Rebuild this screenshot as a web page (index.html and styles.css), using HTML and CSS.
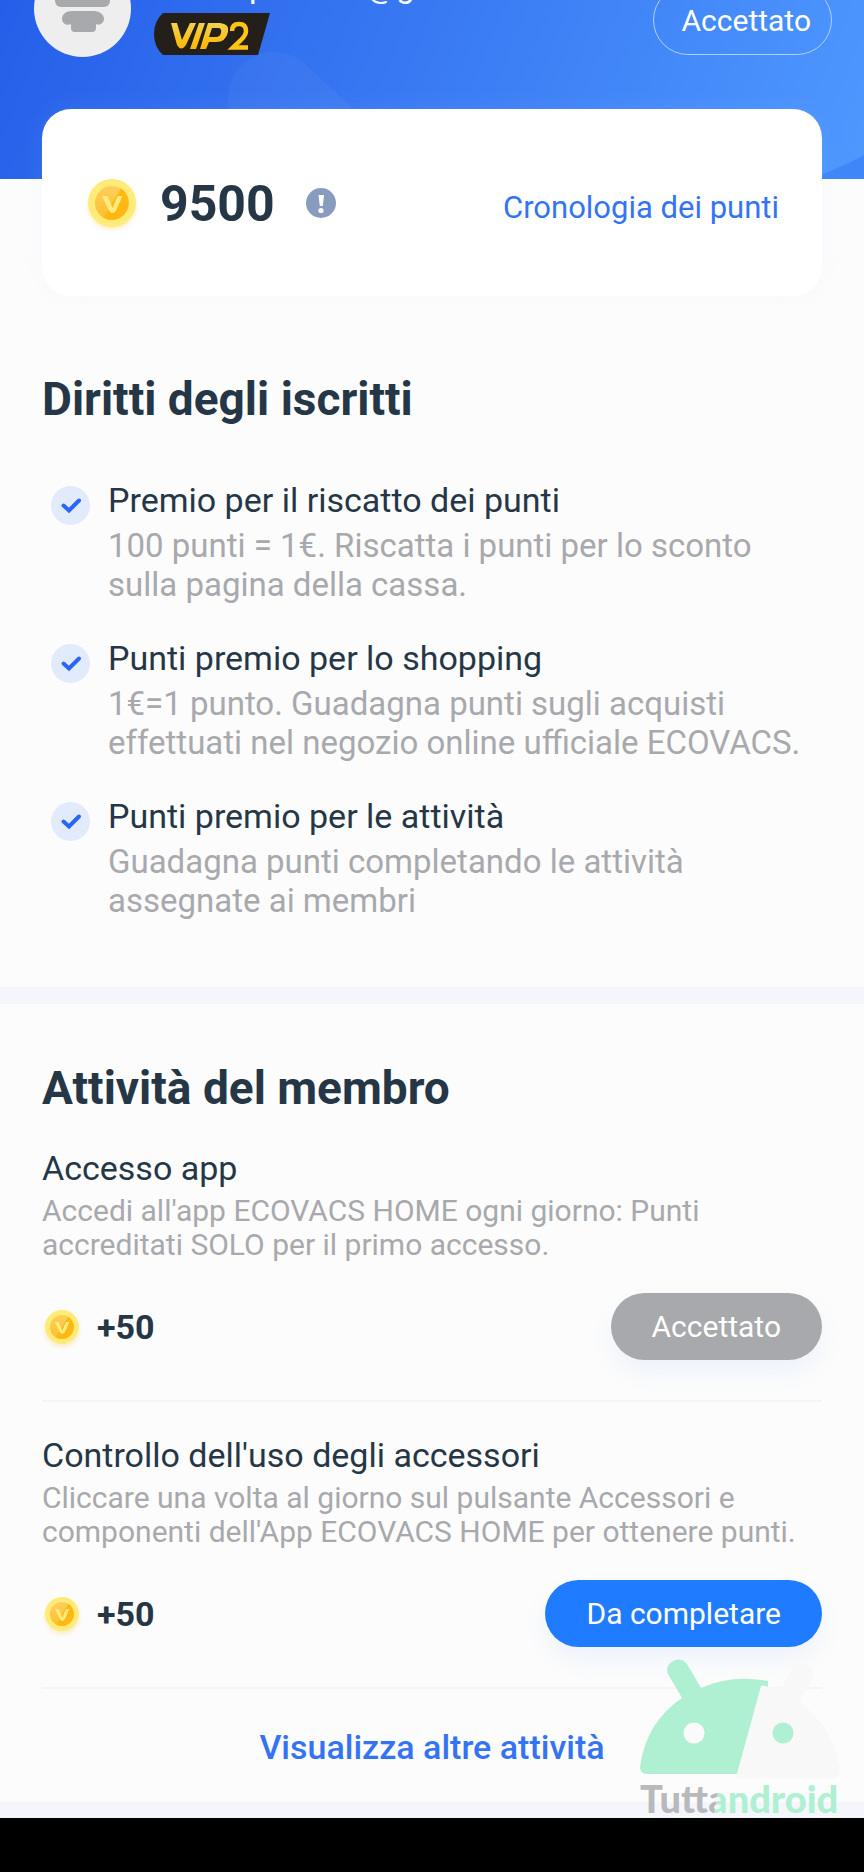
FILE: index.html
```html
<!DOCTYPE html>
<html lang="it">
<head>
<meta charset="utf-8">
<meta name="viewport" content="width=device-width, initial-scale=1">
<title>Punti membro</title>
<link rel="stylesheet" href="styles.css">
</head>
<body>
<svg class="defs" width="0" height="0" aria-hidden="true">
  <defs>
    <linearGradient id="gold" x1="0" y1="0" x2="0" y2="1"><stop offset="0" stop-color="#ffcf5c"/><stop offset="1" stop-color="#ffbe2e"/></linearGradient>
    <symbol id="coin" viewBox="0 0 48 48">
      <circle cx="24" cy="24" r="24" fill="#ffeb78"/>
      <circle cx="24" cy="24" r="17" fill="url(#gold)"/>
      <path d="M33 9.600A17 17 0 0 1 15.500 38.700Z" fill="#ffb812"/>
      <path d="M14 17h4.500q1 0 1.500 1.200l4.500 10.800 4.500-10.800q.5-1.200 1.500-1.200H34.500l-6.500 14.500q-3.500 5-7 0Z" fill="#ffec7c"/>
    </symbol>
    <symbol id="check" viewBox="0 0 39 39">
      <circle cx="19.500" cy="19.500" r="19.500" fill="#e2ebfc"/>
      <path d="M12.500 19.500l5.500 5 10-10" fill="none" stroke="#2868f5" stroke-width="4" stroke-linecap="round"/>
    </symbol>
  </defs>
</svg>
<main class="page">
  <header class="hero">
    <svg class="hero-art" viewBox="0 0 864 179" preserveAspectRatio="none" aria-hidden="true">
      <path d="M228 179V101a46 46 0 0 1 80-34L430 179Z" fill="#fff" fill-opacity=".04"/>
      <path d="M864 155V179H810Q838 169 864 155Z" fill="#2a6ef0" fill-opacity=".4"/>
    </svg>
    <div class="profile">
      <svg class="avatar" viewBox="0 0 97 97" aria-hidden="true">
        <circle cx="48.500" cy="48.500" r="48.500" fill="#eee"/>
        <rect x="21" y="34" width="55" height="13" rx="6" fill="#a8a9ad"/>
        <path d="M38 51h22c6 0 10 4 10 8s-5 7-8 5v4q0 4-4 4H41q-4 0-4-4v-4c-3 2-9 0-9-5s4-8 10-8Z" fill="#a8a9ad"/>
      </svg>
      <div class="identity">
        <p class="email"><span>p</span><span>@g</span></p>
        <svg class="vip" viewBox="0 0 116 42" role="img" aria-label="VIP2">
          <defs><linearGradient id="vipgold" x1="0" y1="0" x2="0" y2="1"><stop offset="0" stop-color="#f2d34d"/><stop offset="1" stop-color="#ffb600"/></linearGradient></defs>
          <path d="M9 0H116L104 42H9Q0 34 0 21T9 0Z" fill="#241f18"/>
          <path d="M17 10h6l5 17 8-17h6l-10 22q-5 7-9 0ZM45 10h6l-9 26h-6ZM54 10h12q10 1 8 9-2 10-12 10h-7l-3 7h-6Zm4 5-3 9h7q4 0 5-4 1-5-3-5Z" fill="url(#vipgold)" fill-rule="evenodd"/>
          <path d="M78 18q0-7 7-7t7 7q0 4-5 9l-8 7.500h15" fill="none" stroke="#ffc414" stroke-width="4.500"/>
        </svg>
      </div>
      <button class="pill outline" type="button">Accettato</button>
    </div>
  </header>

  <section class="points">
    <svg class="coin large" aria-hidden="true"><use href="#coin"/></svg>
    <strong class="total">9500</strong>
    <button class="info" type="button" aria-label="Informazioni">
      <svg viewBox="0 0 30 30" aria-hidden="true"><circle cx="15" cy="15" r="15" fill="#879cbe"/><path d="M12.500 7h5.500l-1.200 11h-3Z" fill="#fff"/><circle cx="15" cy="22.500" r="2.600" fill="#fff"/></svg>
    </button>
    <a class="history" href="#">Cronologia dei punti</a>
  </section>

  <section class="rights">
    <h2>Diritti degli iscritti</h2>
    <ul class="benefits">
      <li><svg class="check" aria-hidden="true"><use href="#check"/></svg><div><h3>Premio per il riscatto dei punti</h3><p>100 punti = 1€. Riscatta i punti per lo sconto sulla pagina della cassa.</p></div></li>
      <li><svg class="check" aria-hidden="true"><use href="#check"/></svg><div><h3>Punti premio per lo shopping</h3><p>1€=1 punto. Guadagna punti sugli acquisti effettuati nel negozio online ufficiale ECOVACS.</p></div></li>
      <li><svg class="check" aria-hidden="true"><use href="#check"/></svg><div><h3>Punti premio per le attività</h3><p>Guadagna punti completando le attività assegnate ai membri</p></div></li>
    </ul>
  </section>

  <section class="activities">
    <h2>Attività del membro</h2>
    <article class="task">
      <h3>Accesso app</h3>
      <p>Accedi all'app ECOVACS HOME ogni giorno: Punti accreditati SOLO per il primo accesso.</p>
      <div class="reward"><svg class="coin" aria-hidden="true"><use href="#coin"/></svg><strong>+50</strong><button class="pill done" type="button">Accettato</button></div>
    </article>
    <article class="task">
      <h3>Controllo dell'uso degli accessori</h3>
      <p>Cliccare una volta al giorno sul pulsante Accessori e componenti dell'App ECOVACS HOME per ottenere punti.</p>
      <div class="reward"><svg class="coin" aria-hidden="true"><use href="#coin"/></svg><strong>+50</strong><button class="pill todo" type="button">Da completare</button></div>
    </article>
    <a class="more" href="#">Visualizza altre attività</a>
  </section>

  <div class="watermark">
    <svg viewBox="0 0 200 120" aria-hidden="true">
      <path d="M162 15L146 43" stroke="#f8f8f8" stroke-width="22" stroke-linecap="round"/>
      <path d="M121 27q16 0 32 12 40 26 47 70 0 10-7 10H97Z" fill="#f8f8f8"/>
      <path d="M42 39L28 15C23 5 39-6 47 5L61 29Q92 15 128 22v6q-4-2-7-1L97 115H6q-6-1-6-7Q6 63 42 39Z" fill="#aef0d1"/>
      <circle cx="54" cy="74" r="10.500" fill="#fafafa"/>
      <circle cx="143" cy="74" r="10.500" fill="#aef0d1"/>
    </svg>
    <p><span>Tutt</span><span class="split">a</span>ndroid</p>
  </div>
  <footer class="navbar"></footer>
</main>
</body>
</html>
```
FILE: styles.css
```css
* { box-sizing: border-box; }
body { margin: 0; background: #fcfcfc; color: #253746; font-family: Roboto, "Noto Sans", sans-serif; }
h2, h3, p, ul { margin: 0; padding: 0; }
a { color: #3474f4; text-decoration: none; }
button { border: 0; padding: 0; font-family: inherit; background: none; cursor: pointer; }
.defs { position: absolute; }
.page { position: relative; min-height: 100vh; display: flex; flex-direction: column; overflow: hidden; }

.hero { position: relative; height: 179px; overflow: hidden; background: linear-gradient(112deg, #255fe9 0%, #397af3 48%, #4e98ff 100%); }
.hero-art { position: absolute; inset: 0; width: 100%; height: 100%; }
.profile { position: relative; display: flex; align-items: flex-end; height: 57px; padding: 0 32px 0 34px; }
.avatar { width: 97px; height: 97px; flex: none; }
.identity { flex: 1; padding-left: 23px; padding-bottom: 2px; }
.email { display: flex; gap: 99px; padding-left: 95px; font-size: 33px; line-height: 32px; margin-bottom: 11px; color: #fff; }
.vip { display: block; width: 116px; height: 42px; }
.pill { height: 67px; padding: 0 41px; border-radius: 34px; color: #fff; font-size: 30px; }
.outline { height: 70px; padding: 0 20px 0 28px; border: 1px solid #b3d0ff; margin-bottom: 2px; border-radius: 35px; }

.points { position: relative; display: flex; align-items: center; height: 187px; margin: -70px 42px 0; padding: 0 43px 0 46px; border-radius: 29px; background: #fff; box-shadow: 0 0 24px rgba(200, 220, 255, .1); }
.coin { width: 34px; height: 34px; flex: none; overflow: visible; border-radius: 50%; filter: drop-shadow(0 3px 2px rgba(255, 200, 70, .3)); }
.coin.large { width: 48px; height: 48px; }
.total { margin-left: 24px; padding-top: 3px; font-size: 50px; font-weight: 700; line-height: 60px; }
.info { margin-left: 31px; width: 30px; height: 30px; }
.info svg { display: block; width: 30px; height: 30px; }
.history { margin-left: auto; padding-top: 10px; font-size: 31px; line-height: 36px; }

h2 { font-size: 46px; line-height: 54px; font-weight: 700; }
h3 { font-size: 34px; line-height: 40px; font-weight: 400; }
.rights { padding: 76px 42px 67px; border-bottom: 17px solid #f4f6fb; }
.benefits { list-style: none; display: flex; flex-direction: column; gap: 34px; margin-top: 54px; }
.benefits li { display: flex; gap: 18px; padding-left: 9px; }
.check { width: 39px; height: 39px; flex: none; margin-top: 6px; }
.benefits p { margin-top: 6px; font-size: 33px; line-height: 39px; color: #a8a9ad; }

.activities { padding: 57px 42px 0; border-bottom: 16px solid #f4f6fb; }
.task { padding: 33px 0 40px; border-bottom: 2px solid #f5f5f6; }
.task p { margin-top: 6px; font-size: 30px; line-height: 34px; color: #a8a9ad; }
.reward { display: flex; align-items: center; margin-top: 31px; padding-left: 3px; }
.reward strong { margin-left: 18px; font-size: 34px; line-height: 40px; font-weight: 700; }
.reward .pill { margin-left: auto; box-shadow: 0 12px 24px rgba(40, 110, 230, .07); }
.done { background: #a8a9ad; }
.todo { background: #1f7bff; }
.more { display: block; padding: 38px 0 35px; text-align: center; font-size: 34px; line-height: 40px; font-weight: 500; }
.navbar { height: 54px; margin-top: auto; background: #000; }

.watermark { position: absolute; right: 24px; bottom: 55px; width: 200px; }
.watermark svg { display: block; width: 200px; height: 120px; }
.watermark p { font-family: Lato, sans-serif; font-weight: 900; font-size: 38px; line-height: 38px; color: #aef0d1; white-space: nowrap; }
.watermark span { color: #b8b9bb; }
.watermark .split { background: linear-gradient(100deg, #b8b9bb 45%, #aef0d1 46%); background-clip: text; color: transparent; }
```
